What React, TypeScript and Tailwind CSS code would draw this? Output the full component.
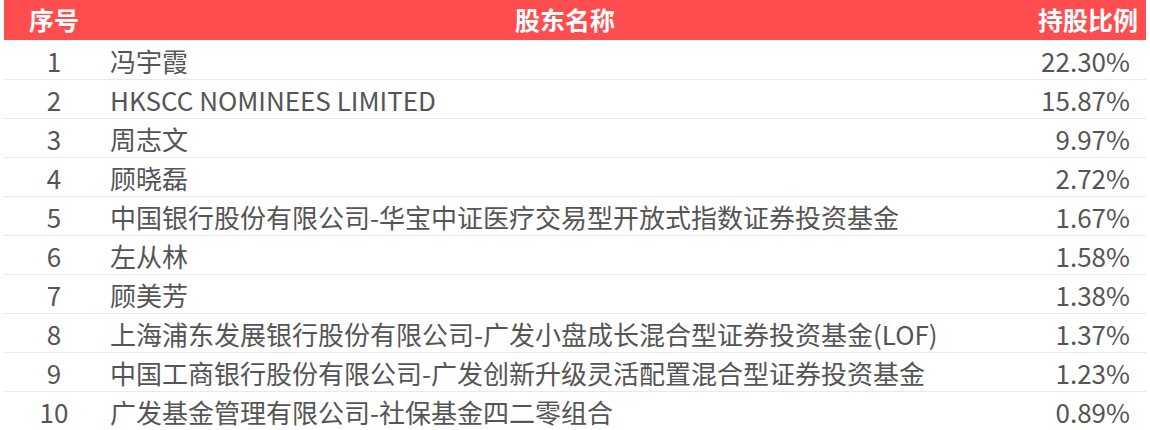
const rows: [string, string, string][] = [
  ['1', '冯宇霞', '22.30%'],
  ['2', 'HKSCC NOMINEES LIMITED', '15.87%'],
  ['3', '周志文', '9.97%'],
  ['4', '顾晓磊', '2.72%'],
  ['5', '中国银行股份有限公司-华宝中证医疗交易型开放式指数证券投资基金', '1.67%'],
  ['6', '左从林', '1.58%'],
  ['7', '顾美芳', '1.38%'],
  ['8', '上海浦东发展银行股份有限公司-广发小盘成长混合型证券投资基金(LOF)', '1.37%'],
  ['9', '中国工商银行股份有限公司-广发创新升级灵活配置混合型证券投资基金', '1.23%'],
  ['10', '广发基金管理有限公司-社保基金四二零组合', '0.89%'],
]

export default function App() {
  return (
    <div className="w-[1150px] h-[430px] bg-white px-[4px] overflow-hidden" style={{ fontFamily: '"Noto Sans CJK SC", "Noto Sans", sans-serif' }}>
      <div className="flex h-[40px] items-center bg-[#ff4d4f] text-white font-bold text-[25px]">
        <div className="w-[100px] text-center">序号</div>
        <div className="flex-1 text-center">股东名称</div>
        <div className="w-[120px] text-right pr-[8px]">持股比例</div>
      </div>
      <div className="pt-[1px]">
        {rows.map(([n, name, pct]) => (
          <div key={n} className="flex h-[39px] items-center border-b border-[#e8e8ee] last:border-b-0 text-[#555555] text-[26px]">
            <div className="w-[100px] text-center">{n}</div>
            <div className="flex-1 pl-[6px] whitespace-nowrap">{name}</div>
            <div className="w-[120px] text-right pr-[16px] whitespace-nowrap">{pct}</div>
          </div>
        ))}
      </div>
    </div>
  )
}
